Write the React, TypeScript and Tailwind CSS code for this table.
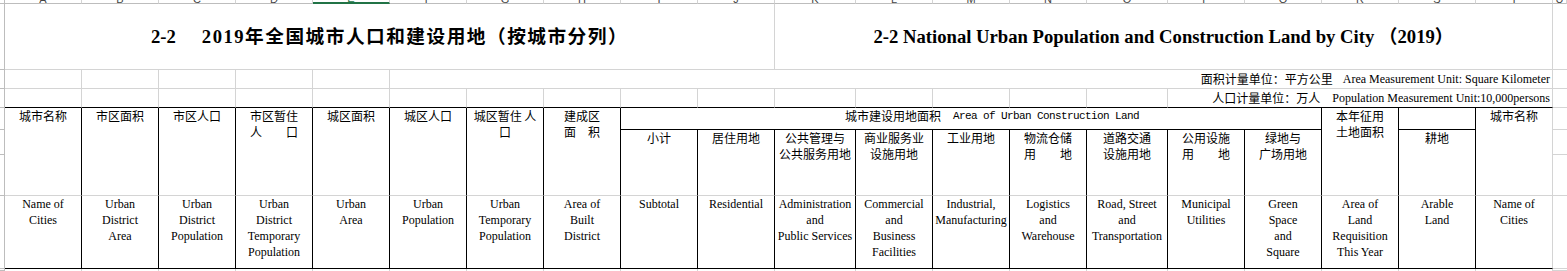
const ZH = "font-['Noto_Sans_CJK_SC',sans-serif]";
const EN = "font-['Liberation_Serif',serif]";

const COLS = [
  "col-start-1", "col-start-2", "col-start-3", "col-start-4", "col-start-5", "col-start-6",
  "col-start-7", "col-start-8", "col-start-9", "col-start-10", "col-start-11", "col-start-12",
  "col-start-13", "col-start-14", "col-start-15", "col-start-16", "col-start-17", "col-start-18",
  "col-start-19", "col-start-20", "col-start-21", "col-start-22",
];
const ROWS = [
  "row-start-1", "row-start-2", "row-start-3", "row-start-4", "row-start-5",
  "row-start-6", "row-start-7", "row-start-8", "row-start-9",
];
const LETTERS = "ABCDEFGHIJKLMNOPQRSTU".split("");

type Col = { pos: string; zh: string[]; en: string[] };

// columns whose chinese title spans the whole upper header
const mainCols: Col[] = [
  { pos: "col-start-2", zh: ["城市名称"], en: ["Name of", "Cities"] },
  { pos: "col-start-3", zh: ["市区面积"], en: ["Urban", "District", "Area"] },
  { pos: "col-start-4", zh: ["市区人口"], en: ["Urban", "District", "Population"] },
  { pos: "col-start-5", zh: ["市区暂住", "人\u3000\u3000口"], en: ["Urban", "District", "Temporary", "Population"] },
  { pos: "col-start-6", zh: ["城区面积"], en: ["Urban", "Area"] },
  { pos: "col-start-7", zh: ["城区人口"], en: ["Urban", "Population"] },
  { pos: "col-start-8", zh: ["城区暂住 人", "口"], en: ["Urban", "Temporary", "Population"] },
  { pos: "col-start-9", zh: ["建成区", "面\u3000积"], en: ["Area of", "Built", "District"] },
  { pos: "col-start-19", zh: ["本年征用", "土地面积"], en: ["Area of", "Land", "Requisition", "This Year"] },
];

// columns under 城市建设用地面积 and 耕地
const subCols: Col[] = [
  { pos: "col-start-10", zh: ["小计"], en: ["Subtotal"] },
  { pos: "col-start-11", zh: ["居住用地"], en: ["Residential"] },
  { pos: "col-start-12", zh: ["公共管理与", "公共服务用地"], en: ["Administration", "and", "Public Services"] },
  { pos: "col-start-13", zh: ["商业服务业", "设施用地"], en: ["Commercial", "and", "Business", "Facilities"] },
  { pos: "col-start-14", zh: ["工业用地"], en: ["Industrial,", "Manufacturing"] },
  { pos: "col-start-15", zh: ["物流仓储", "用\u3000\u3000地"], en: ["Logistics", "and", "Warehouse"] },
  { pos: "col-start-16", zh: ["道路交通", "设施用地"], en: ["Road, Street", "and", "Transportation"] },
  { pos: "col-start-17", zh: ["公用设施", "用\u3000\u3000地"], en: ["Municipal", "Utilities"] },
  { pos: "col-start-18", zh: ["绿地与", "广场用地"], en: ["Green", "Space", "and", "Square"] },
  { pos: "col-start-20", zh: ["耕地"], en: ["Arable", "Land"] },
];

function Lines({ lines }: { lines: string[] }) {
  return (
    <>
      {lines.map((l, i) => (
        <div key={i} className="whitespace-pre">
          {l}
        </div>
      ))}
    </>
  );
}

export default function App() {
  const range = (a: number, b: number) => Array.from({ length: b - a + 1 }, (_, i) => a + i);

  return (
    <div className="w-[1567px] h-[271px] overflow-hidden bg-white text-black">
      <div className="grid h-full grid-cols-[5px_repeat(10,77px)_81px_repeat(3,77px)_81px_repeat(5,77px)_1fr] grid-rows-[4px_66px_19px_19px_22px_25px_41px_73px_1fr]">
        {/* column header strip */}
        <div className="col-start-1 row-start-1 border-r border-b border-[#bdbdbd]" />
        {LETTERS.map((l, i) => (
          <div
            key={l}
            className={`${COLS[i + 1]} row-start-1 flex items-end justify-center overflow-hidden border-r border-[#d4d4d4] ${
              i === 4 ? "border-b-2 border-b-[#217346] text-[#217346]" : "border-b border-b-[#bdbdbd] text-[#444]"
            }`}
          >
            <span className="translate-y-[2px] font-['Liberation_Sans',sans-serif] text-[11px] leading-[11px]">{l}</span>
          </div>
        ))}

        {/* row headers on the left and the cut column on the right */}
        {range(2, 9).map((r) => (
          <div key={`rh${r}`} className={`col-start-1 ${ROWS[r - 1]} border-r border-b border-[#bdbdbd]`} />
        ))}
        {range(2, 9).map((r) => (
          <div key={`rc${r}`} className={`col-start-22 ${ROWS[r - 1]} border-b border-[#d4d4d4]`} />
        ))}

        {/* title row */}
        <div className="col-start-2 col-span-10 row-start-2 flex items-center justify-center border-r border-b border-[#d4d4d4] font-['Liberation_Serif','Noto_Sans_CJK_SC',serif] text-[18.67px] font-bold">
          <span className="mr-[26px]">2-2</span>
          <span className="tracking-[1.5px]">2019年全国城市人口和建设用地（按城市分列）</span>
        </div>
        <div className="col-start-12 col-span-10 row-start-2 flex items-center justify-center whitespace-pre border-r border-b border-[#d4d4d4] font-['Liberation_Serif','Noto_Sans_CJK_SC',serif] text-[18.67px] font-bold">
          2-2 National Urban Population and Construction Land by City （2019）
        </div>

        {/* unit rows */}
        {range(2, 6).map((c) => (
          <div key={`u1${c}`} className={`${COLS[c - 1]} row-start-3 border-r border-b border-[#d4d4d4]`} />
        ))}
        <div className="col-start-7 col-span-15 row-start-3 flex items-center justify-end border-r border-b border-[#d4d4d4] pr-[2px] text-[12px] leading-[16px]">
          <span className={ZH}>面积计量单位：平方公里</span>
          <span className={`${EN} ml-[10px]`}>Area Measurement Unit: Square Kilometer</span>
        </div>
        {range(2, 16).map((c) => (
          <div key={`u2${c}`} className={`${COLS[c - 1]} row-start-4 border-r border-r-[#d4d4d4] border-b border-b-black`} />
        ))}
        <div className="col-start-17 col-span-5 row-start-4 flex items-center justify-end border-r border-r-[#d4d4d4] border-b border-b-black pr-[2px] text-[12px] leading-[16px]">
          <span className={ZH}>人口计量单位：万人</span>
          <span className={`${EN} ml-[12px]`}>Population Measurement Unit:10,000persons</span>
        </div>

        {/* table header */}
        {mainCols.map((c) => (
          <div key={`z${c.pos}`} className={`${c.pos} row-start-5 row-span-3 border-r border-r-black border-b border-b-[#d4d4d4] text-center text-[12px] leading-[16px] ${ZH}`}>
            <Lines lines={c.zh} />
          </div>
        ))}
        <div className="col-start-10 col-span-9 row-start-5 flex border-r border-b border-black pl-[224px] text-[12px] leading-[16px]">
          <span className={ZH}>城市建设用地面积</span>
          <span className="ml-[12px] whitespace-pre font-['Liberation_Mono',monospace] text-[11px] tracking-[-0.6px]">
            Area of Urban Construction Land
          </span>
        </div>
        <div className="col-start-20 row-start-5 border-r border-b border-black" />
        {subCols.map((c) => (
          <div key={`z${c.pos}`} className={`${c.pos} row-start-6 row-span-2 border-r border-r-black border-b border-b-[#d4d4d4] text-center text-[12px] leading-[16px] ${ZH}`}>
            <Lines lines={c.zh} />
          </div>
        ))}
        <div className={`col-start-21 row-start-5 row-span-3 border-r border-b border-[#d4d4d4] text-center text-[12px] leading-[16px] ${ZH}`}>
          城市名称
        </div>

        {[...mainCols, ...subCols].map((c) => (
          <div key={`e${c.pos}`} className={`${c.pos} row-start-8 border-r border-b border-black text-center text-[12px] leading-[16px] ${EN}`}>
            <Lines lines={c.en} />
          </div>
        ))}
        <div className={`col-start-21 row-start-8 border-r border-r-[#d4d4d4] border-b border-b-black text-center text-[12px] leading-[16px] ${EN}`}>
          <Lines lines={["Name of", "Cities"]} />
        </div>

        {/* first data row, cut off */}
        {range(2, 21).map((c) => (
          <div key={`b${c}`} className={`${COLS[c - 1]} row-start-9 border-r border-[#d4d4d4]`} />
        ))}
      </div>
    </div>
  );
}
